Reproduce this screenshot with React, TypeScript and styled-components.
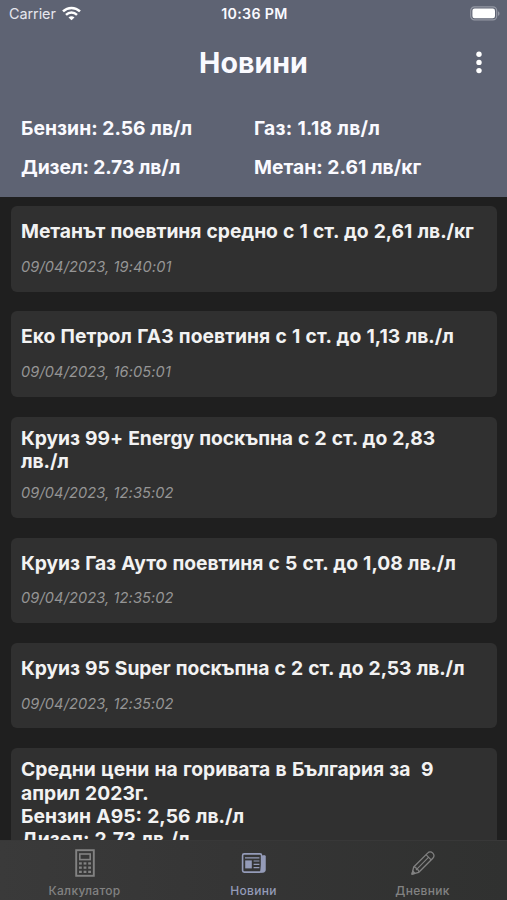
import React from "react";
import styled, { createGlobalStyle } from "styled-components";

const GlobalStyle = createGlobalStyle`
  * { box-sizing: border-box; }
  html, body { margin: 0; padding: 0; background: #1e1e1e; }
`;

const Screen = styled.div`
  width: 507px;
  height: 900px;
  display: flex;
  flex-direction: column;
  overflow: hidden;
  background: #1f1f1f;
  color: #f2f2f2;
  font-family: Inter, "Liberation Sans", sans-serif;
`;

const Header = styled.header`
  flex: none;
  height: 196.5px;
  background: #5e6373;
  color: #fafaff;
`;

const StatusBar = styled.div`
  height: 27px;
  padding: 0 7px 0 9px;
  display: grid;
  grid-template-columns: 1fr auto 1fr;
  align-items: center;
  font-size: 14.4px;
`;

const Carrier = styled.div`
  display: flex;
  align-items: center;
  gap: 6px;
  color: #e6e7ee;
  letter-spacing: -0.05px;
`;

const Clock = styled.div`
  font-weight: 600;
  font-size: 14.2px;
  letter-spacing: 0.35px;
`;

const Battery = styled.svg`
  justify-self: end;
  display: block;
`;

const TitleBar = styled.div`
  height: 71px;
  padding: 0 20px;
  display: grid;
  grid-template-columns: 1fr auto 1fr;
  align-items: center;
`;

const PageTitle = styled.h1`
  grid-column: 2;
  margin: 0;
  font-size: 28.6px;
  line-height: 36px;
  font-weight: 700;
`;

const MenuButton = styled.button`
  justify-self: end;
  display: flex;
  padding: 0;
  border: 0;
  background: none;
  color: #fff;
`;

const Prices = styled.div`
  padding: 10px 0 0 21px;
  display: grid;
  grid-template-columns: 233px 1fr;
  grid-auto-rows: 39px;
  align-items: center;
`;

const Price = styled.div<{ $spacing: number }>`
  font-size: 19.3px;
  font-weight: 650;
  white-space: nowrap;
  letter-spacing: ${(p) => p.$spacing}px;
`;

const Feed = styled.main`
  flex: 1;
  min-height: 0;
  overflow: hidden;
  padding: 9.7px 10px 0 11px;
  display: flex;
  flex-direction: column;
  gap: 19.8px;
`;

const Card = styled.article`
  flex: none;
  padding: 10.2px 10px 0;
  border-radius: 6px;
  background: #303030;
`;

const Headline = styled.h2<{ $spacing: number }>`
  margin: 0;
  min-height: 30.8px;
  display: flex;
  align-items: center;
  font-size: 19.3px;
  line-height: 23.4px;
  font-weight: 650;
  white-space: pre;
  letter-spacing: ${(p) => p.$spacing}px;
  word-spacing: 0.7px;
`;

const Stamp = styled.time`
  display: block;
  height: 44.4px;
  padding-top: 9.7px;
  font-size: 14.6px;
  line-height: 20px;
  font-style: italic;
  color: #959595;
  letter-spacing: 0.1px;
`;

const TabBar = styled.nav`
  flex: none;
  height: 60.5px;
  display: grid;
  grid-template-columns: repeat(3, 1fr);
  background: linear-gradient(90deg, #3a3a3a, #353535 45%, #303130);
  border-top: 1px solid #383838;
`;

const Tab = styled.a<{ $active?: boolean }>`
  display: flex;
  flex-direction: column;
  align-items: center;
  color: ${(p) => (p.$active ? "#949bb8" : "#828282")};
`;

const TabIcon = styled.svg`
  display: block;
  margin-top: 8px;
`;

const TabLabel = styled.span`
  margin-top: 6px;
  font-size: 12px;
  line-height: 16px;
  font-weight: 500;
  letter-spacing: 0.3px;
`;

const prices = [
  { text: "Бензин: 2.56 лв/л", spacing: 0.03 },
  { text: "Газ: 1.18 лв/л", spacing: 0.28 },
  { text: "Дизел: 2.73 лв/л", spacing: -0.1 },
  { text: "Метан: 2.61 лв/кг", spacing: 0.02 },
];

const news = [
  { title: "Метанът поевтиня средно с 1 ст. до 2,61 лв./кг", date: "09/04/2023, 19:40:01", spacing: -0.06 },
  { title: "Еко Петрол ГАЗ поевтиня с 1 ст. до 1,13 лв./л", date: "09/04/2023, 16:05:01", spacing: -0.01 },
  { title: "Круиз 99+ Energy поскъпна с 2 ст. до 2,83\nлв./л", date: "09/04/2023, 12:35:02", spacing: -0.08 },
  { title: "Круиз Газ Ауто поевтиня с 5 ст. до 1,08 лв./л", date: "09/04/2023, 12:35:02", spacing: -0.06 },
  { title: "Круиз 95 Super поскъпна с 2 ст. до 2,53 лв./л", date: "09/04/2023, 12:35:02", spacing: -0.09 },
  {
    title: "Средни цени на горивата в България за  9\nаприл 2023г.\nБензин А95: 2,56 лв./л\nДизел: 2,73 лв./л",
    spacing: 0,
  },
];

const WifiIcon = () => (
  <svg width="19" height="15" viewBox="0 0 19 15" fill="none" stroke="#fff" strokeWidth="2.5">
    <path d="M1 5.4C5.8.8 13.2.8 18 5.4" />
    <path d="M4 8.8c3.2-3 7.8-3 11 0" />
    <path d="M9.5 14.2 6.5 11.4c1.7-1.6 4.3-1.6 6 0Z" fill="#fff" stroke="none" />
  </svg>
);

const CalculatorIcon = () => (
  <TabIcon width="20" height="28" viewBox="0 0 20 28" fill="none" stroke="currentColor">
    <rect x="1.2" y="1.2" width="17.6" height="25.6" strokeWidth="1.9" />
    <rect x="4.8" y="5" width="10.4" height="5.6" strokeWidth="1.6" />
    <g fill="currentColor" stroke="none">
      {[13.3, 17.5, 21.7].map((y) =>
        [4, 8.6, 13.2].map((x) => <rect key={`${x}-${y}`} x={x} y={y} width="2.8" height="2.3" />)
      )}
    </g>
  </TabIcon>
);

const NewspaperIcon = () => (
  <TabIcon width="26" height="28" viewBox="0 0 26 28" fill="none" stroke="currentColor">
    <rect x="1.6" y="4.9" width="19" height="18.2" rx="1.6" strokeWidth="1.6" />
    <path d="M21.5 6.8h2.7v14.4a2 2 0 0 1-2 2h-2.5Z" fill="currentColor" strokeWidth="1" />
    <path d="M4 8.8h14.4M12.6 12h5.8M12.6 15.3h5.8M12.6 18.6h5.8" strokeWidth="1.2" />
    <rect x="4.2" y="11.4" width="6.6" height="8" fill="currentColor" stroke="none" />
  </TabIcon>
);

const PencilIcon = () => (
  <TabIcon width="26" height="28" viewBox="0 0 26 28" fill="none" stroke="currentColor" strokeWidth="1.3" strokeLinejoin="round">
    <path d="M2 25.2 3.7 18 17.6 4.1c1.5-1.6 3.6-1.6 5.2 0s1.6 3.7 0 5.2L8.8 23.3Z" />
    <path d="m3.8 18 2.1.4.5 2.2 2.1.4.4 2.2M16 5.7l5.2 5.2M6.4 20.6 18.4 8.4" strokeWidth="1.1" />
    <path d="m2 25.2 3-.8L2.8 22Z" fill="currentColor" />
  </TabIcon>
);

export default function App() {
  return (
    <Screen>
      <GlobalStyle />
      <Header>
        <StatusBar>
          <Carrier>
            Carrier <WifiIcon />
          </Carrier>
          <Clock>10:36 PM</Clock>
          <Battery width="30" height="15" viewBox="0 0 30 15">
            <rect x="0.7" y="0.9" width="26" height="13" rx="3.8" fill="none" stroke="#9498a4" strokeWidth="1.2" />
            <rect x="2.4" y="2.6" width="22.6" height="9.6" rx="2.2" fill="#fff" />
            <path d="M28 5.2c2 .8 2 3.8 0 4.6Z" fill="#9498a4" />
          </Battery>
        </StatusBar>
        <TitleBar>
          <PageTitle>Новини</PageTitle>
          <MenuButton aria-label="Меню">
            <svg width="16" height="24" viewBox="0 0 16 24" fill="currentColor">
              <circle cx="8" cy="3.2" r="2.7" />
              <circle cx="8" cy="11.4" r="2.7" />
              <circle cx="8" cy="19.6" r="2.7" />
            </svg>
          </MenuButton>
        </TitleBar>
        <Prices>
          {prices.map((p) => (
            <Price key={p.text} $spacing={p.spacing}>{p.text}</Price>
          ))}
        </Prices>
      </Header>
      <Feed>
        {news.map((n) => (
          <Card key={n.title}>
            <Headline $spacing={n.spacing}>{n.title}</Headline>
            {n.date && <Stamp>{n.date}</Stamp>}
          </Card>
        ))}
      </Feed>
      <TabBar>
        <Tab>
          <CalculatorIcon />
          <TabLabel>Калкулатор</TabLabel>
        </Tab>
        <Tab $active>
          <NewspaperIcon />
          <TabLabel>Новини</TabLabel>
        </Tab>
        <Tab>
          <PencilIcon />
          <TabLabel>Дневник</TabLabel>
        </Tab>
      </TabBar>
    </Screen>
  );
}
